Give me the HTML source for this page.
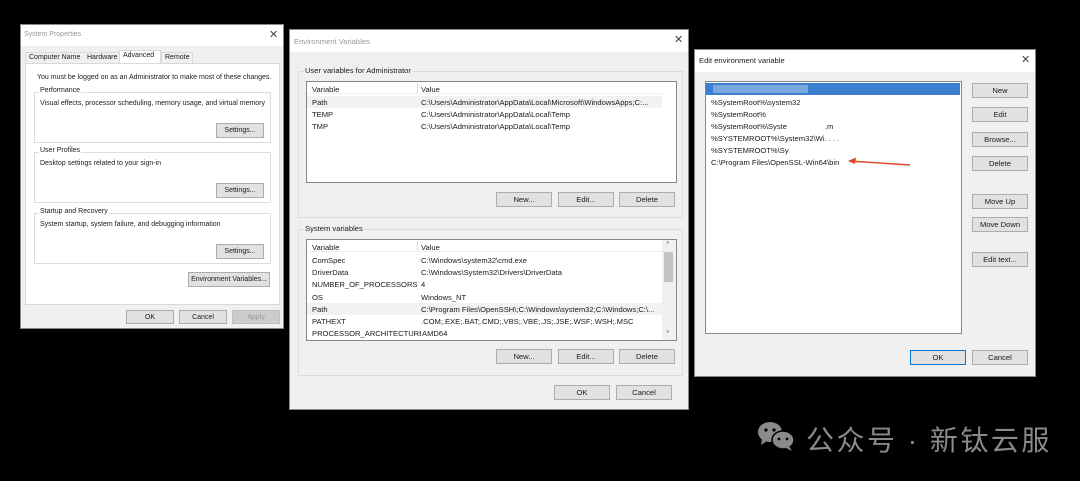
<!DOCTYPE html>
<html><head><meta charset="utf-8"><style>
*{margin:0;padding:0;box-sizing:border-box}
body{width:1080px;height:481px;background:#000;position:relative;overflow:hidden;font-family:"Liberation Sans",sans-serif;font-size:7.6px;color:#1a1a1a}
.a{position:absolute;white-space:nowrap}
.win{background:#f0f0f0;border:1px solid #888}
.tb{background:#fff}
.btn{position:absolute;background:#e1e1e1;border:1px solid #adadad;text-align:center;line-height:13px;font-size:7.6px}
.grp{position:absolute;border:1px solid #dcdcdc}
.lbl{position:absolute;background:#f0f0f0;padding:0 1px;top:-6px;left:4px}
.list{position:absolute;background:#fff;border:1px solid #828790}
.x{position:absolute;font-size:11px;color:#444}
.gt{color:#999}
.w1,.w1 .btn{font-size:7px}
</style></head><body>

<!-- Window 1 -->
<div class="a win w1" style="left:20px;top:24px;width:264px;height:305px">
 <div class="a tb" style="left:0;top:0;width:262px;height:21px"></div>
 <div class="a gt" style="left:3px;top:6px">System Properties</div>
 <div class="x" style="left:248px;top:3px">✕</div>
 <div class="a" style="left:4px;top:27px;width:95px;height:12px;border:1px solid #d9d9d9;border-bottom:none"></div>
 <div class="a" style="left:8px;top:29px">Computer Name</div>
 <div class="a" style="left:66px;top:29px">Hardware</div>
 <div class="a" style="left:98px;top:25px;width:42px;height:14px;background:#fff;border:1px solid #d9d9d9;border-bottom:none"></div>
 <div class="a" style="left:102px;top:27px">Advanced</div>
 <div class="a" style="left:140px;top:27px;width:32px;height:12px;border:1px solid #d9d9d9;border-bottom:none"></div>
 <div class="a" style="left:144px;top:29px">Remote</div>
 <div class="a" style="left:4px;top:38px;width:255px;height:242px;background:#fff;border:1px solid #d9d9d9"></div>
 <div class="a" style="left:16px;top:49px">You must be logged on as an Administrator to make most of these changes.</div>
 <div class="grp" style="left:13px;top:67px;width:237px;height:51px"><div class="lbl" style="background:#fff">Performance</div>
  <div class="a" style="left:5px;top:7px">Visual effects, processor scheduling, memory usage, and virtual memory</div>
  <div class="btn" style="left:181px;top:30px;width:48px;height:15px">Settings...</div></div>
 <div class="grp" style="left:13px;top:127px;width:237px;height:51px"><div class="lbl" style="background:#fff">User Profiles</div>
  <div class="a" style="left:5px;top:7px">Desktop settings related to your sign-in</div>
  <div class="btn" style="left:181px;top:30px;width:48px;height:15px">Settings...</div></div>
 <div class="grp" style="left:13px;top:188px;width:237px;height:51px"><div class="lbl" style="background:#fff">Startup and Recovery</div>
  <div class="a" style="left:5px;top:7px">System startup, system failure, and debugging information</div>
  <div class="btn" style="left:181px;top:30px;width:48px;height:15px">Settings...</div></div>
 <div class="btn" style="left:167px;top:247px;width:82px;height:15px">Environment Variables...</div>
 <div class="btn" style="left:105px;top:285px;width:48px;height:14px">OK</div>
 <div class="btn" style="left:158px;top:285px;width:48px;height:14px">Cancel</div>
 <div class="btn" style="left:211px;top:285px;width:48px;height:14px;color:#999;background:#ccc;border-color:#bfbfbf">Apply</div>
</div>

<!-- Window 2 -->
<div class="a win" style="left:289px;top:29px;width:400px;height:381px">
 <div class="a tb" style="left:0;top:0;width:398px;height:22px"></div>
 <div class="a gt" style="left:4px;top:7px">Environment Variables</div>
 <div class="x" style="left:384px;top:3px">✕</div>
 <div class="grp" style="left:8px;top:41px;width:385px;height:147px"><div class="lbl" style="top:-6px;left:5px">User variables for Administrator</div></div>
 <div class="list" style="left:16px;top:51px;width:371px;height:102px">
  <div class="a" style="left:0;top:0;width:355px;height:12px;border-bottom:1px solid #eee"></div>
  <div class="a" style="left:110px;top:1px;width:1px;height:10px;background:#ddd"></div>
  <div class="a" style="left:5px;top:3px">Variable</div><div class="a" style="left:114px;top:3px">Value</div>
  <div class="a" style="left:0;top:14px;width:355px;height:12px;background:#f2f2f2"></div>
  <div class="a" style="left:5px;top:16px">Path</div><div class="a" style="left:114px;top:16px">C:\Users\Administrator\AppData\Local\Microsoft\WindowsApps;C:...</div>
  <div class="a" style="left:5px;top:28px">TEMP</div><div class="a" style="left:114px;top:28px">C:\Users\Administrator\AppData\Local\Temp</div>
  <div class="a" style="left:5px;top:40px">TMP</div><div class="a" style="left:114px;top:40px">C:\Users\Administrator\AppData\Local\Temp</div>
 </div>
 <div class="btn" style="left:206px;top:162px;width:56px;height:15px">New...</div>
 <div class="btn" style="left:268px;top:162px;width:56px;height:15px">Edit...</div>
 <div class="btn" style="left:329px;top:162px;width:56px;height:15px">Delete</div>
 <div class="grp" style="left:8px;top:199px;width:385px;height:147px"><div class="lbl" style="top:-6px;left:5px">System variables</div></div>
 <div class="list" style="left:16px;top:209px;width:371px;height:102px">
  <div class="a" style="left:0;top:0;width:355px;height:12px;border-bottom:1px solid #eee"></div>
  <div class="a" style="left:110px;top:1px;width:1px;height:10px;background:#ddd"></div>
  <div class="a" style="left:5px;top:3px">Variable</div><div class="a" style="left:114px;top:3px">Value</div>
  <div class="a" style="left:5px;top:16px">ComSpec</div><div class="a" style="left:114px;top:16px">C:\Windows\system32\cmd.exe</div>
  <div class="a" style="left:5px;top:28px">DriverData</div><div class="a" style="left:114px;top:28px">C:\Windows\System32\Drivers\DriverData</div>
  <div class="a" style="left:5px;top:40px">NUMBER_OF_PROCESSORS</div><div class="a" style="left:114px;top:40px">4</div>
  <div class="a" style="left:5px;top:53px">OS</div><div class="a" style="left:114px;top:53px">Windows_NT</div>
  <div class="a" style="left:0;top:63px;width:355px;height:12px;background:#f2f2f2"></div>
  <div class="a" style="left:5px;top:65px">Path</div><div class="a" style="left:114px;top:65px">C:\Program Files\OpenSSH\;C:\Windows\system32;C:\Windows;C:\...</div>
  <div class="a" style="left:5px;top:77px">PATHEXT</div><div class="a" style="left:114px;top:77px">.COM;.EXE;.BAT;.CMD;.VBS;.VBE;.JS;.JSE;.WSF;.WSH;.MSC</div>
  <div class="a" style="left:5px;top:89px;height:11px;overflow:hidden">PROCESSOR_ARCHITECTURE</div><div class="a" style="left:114px;top:89px;height:11px;overflow:hidden;background:#fff;padding-left:1px">AMD64</div>
  <div class="a" style="left:355px;top:0;width:14px;height:100px;background:#f0f0f0"></div>
  <div class="a" style="left:357px;top:12px;width:9px;height:30px;background:#c2c2c2"></div>
  <div class="a" style="left:359px;top:1px;font-size:6px;color:#666">˄</div>
  <div class="a" style="left:359px;top:90px;font-size:6px;color:#666">˅</div>
 </div>
 <div class="btn" style="left:206px;top:319px;width:56px;height:15px">New...</div>
 <div class="btn" style="left:268px;top:319px;width:56px;height:15px">Edit...</div>
 <div class="btn" style="left:329px;top:319px;width:56px;height:15px">Delete</div>
 <div class="btn" style="left:264px;top:355px;width:56px;height:15px">OK</div>
 <div class="btn" style="left:326px;top:355px;width:56px;height:15px">Cancel</div>
</div>

<!-- Window 3 -->
<div class="a win" style="left:694px;top:49px;width:342px;height:328px">
 <div class="a tb" style="left:0;top:0;width:340px;height:22px"></div>
 <div class="a" style="left:4px;top:6px">Edit environment variable</div>
 <div class="x" style="left:326px;top:3px">✕</div>
 <div class="list" style="left:10px;top:31px;width:257px;height:253px">
  <div class="a" style="left:0;top:1px;width:254px;height:12px;background:#3c7fd0"></div>
  <div class="a" style="left:7px;top:3px;width:95px;height:8px;background:#7aa7dd"></div>
  <div class="a" style="left:5px;top:16px">%SystemRoot%\system32</div>
  <div class="a" style="left:5px;top:28px">%SystemRoot%</div>
  <div class="a" style="left:5px;top:40px">%SystemRoot%\Syste<span style="color:#fff">mmmmmm</span>.m</div>
  <div class="a" style="left:5px;top:52px">%SYSTEMROOT%\System32\Wi. . . .</div>
  <div class="a" style="left:5px;top:64px">%SYSTEMROOT%\Sy</div>
  <div class="a" style="left:5px;top:76px">C:\Program Files\OpenSSL-Win64\bin</div>
  <svg class="a" style="left:140px;top:74px" width="70" height="12"><path d="M3 5 L64 9" stroke="#e0452a" stroke-width="1.4"/><path d="M2 5 L10 1.5 L9 8 Z" fill="#e0452a"/></svg>
 </div>
 <div class="btn" style="left:277px;top:33px;width:56px;height:15px">New</div>
 <div class="btn" style="left:277px;top:57px;width:56px;height:15px">Edit</div>
 <div class="btn" style="left:277px;top:82px;width:56px;height:15px">Browse...</div>
 <div class="btn" style="left:277px;top:106px;width:56px;height:15px">Delete</div>
 <div class="btn" style="left:277px;top:144px;width:56px;height:15px">Move Up</div>
 <div class="btn" style="left:277px;top:167px;width:56px;height:15px">Move Down</div>
 <div class="btn" style="left:277px;top:202px;width:56px;height:15px">Edit text...</div>
 <div class="btn" style="left:215px;top:300px;width:56px;height:15px;border:1px solid #0078d7">OK</div>
 <div class="btn" style="left:277px;top:300px;width:56px;height:15px">Cancel</div>
</div>

<!-- Watermark -->
<svg class="a" style="left:756px;top:420px" width="40" height="32">
 <ellipse cx="14" cy="12" rx="12" ry="10" fill="#8a8a8a"/>
 <path d="M6 19 L5 25 L11 21Z" fill="#8a8a8a"/>
 <ellipse cx="27" cy="20" rx="11" ry="9" fill="#8a8a8a" stroke="#000" stroke-width="1.5"/>
 <path d="M33 26 L36 31 L30 28Z" fill="#8a8a8a"/>
 <circle cx="10" cy="10" r="1.6" fill="#000"/><circle cx="18" cy="10" r="1.6" fill="#000"/>
 <circle cx="23" cy="19" r="1.4" fill="#000"/><circle cx="31" cy="19" r="1.4" fill="#000"/>
</svg>
<div class="a" style="left:806px;top:419px;font-family:'Liberation Sans','Noto Sans CJK SC',sans-serif;font-size:28px;color:#8a8a8a;letter-spacing:2.5px">公众号 · 新钛云服</div>
</body></html>
